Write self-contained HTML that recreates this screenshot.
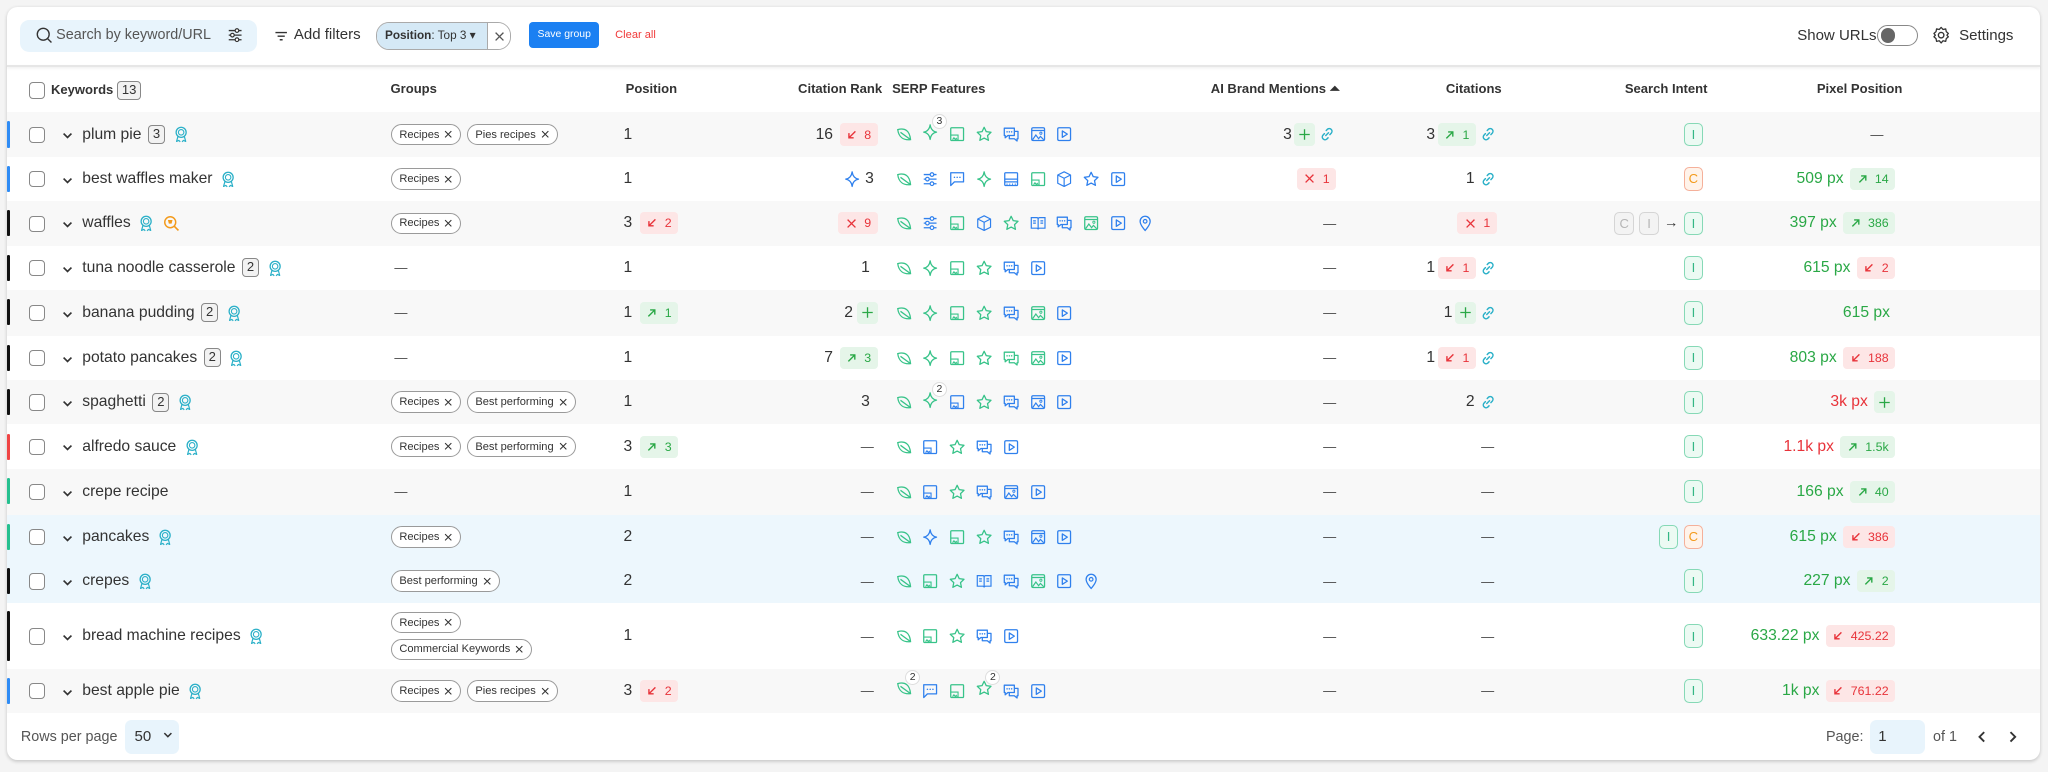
<!DOCTYPE html>
<html><head><meta charset="utf-8">
<style>
html{zoom:1.30612}
body{margin:0;width:1568px;height:591px;background:#f4f4f4;font-family:"Liberation Sans",sans-serif;color:#333;position:relative;overflow:hidden}
.card{position:absolute;left:5px;top:5px;width:1557px;height:577px;background:#fff;border-radius:8px;box-shadow:0 1px 3px rgba(0,0,0,.2)}
.abs{position:absolute}
.r{position:absolute;left:5px;width:1557px;height:34px}
.g{background:#f8f8f8}.bl{background:#edf7fd}
.bar{position:absolute;left:0;top:7px;width:3px;height:20px;border-radius:1px}
.c{position:absolute;top:0;height:100%;display:flex;align-items:center;gap:5px;font-size:12px;white-space:nowrap}
.cb{position:absolute;left:17px;top:50%;margin-top:-6px;width:11px;height:11px;border:1px solid #888;border-radius:3px;background:#fff}
.chev{position:absolute;left:42px;top:50%;margin-top:-4px}
.kw{left:58px}.grp{left:294px;gap:4px}.pn{right:1078px}.pb{left:485px}.cr{right:890px}.sf{left:680px;gap:6.5px}.ai{right:539px}.ci{right:416px}.si{right:258px;gap:4px}.px{right:111px}
.num{display:inline-block;border:1px solid #888;border-radius:3px;background:#f2f2f2;font-size:10px;line-height:13px;padding:0 3px}
.chip{display:inline-flex;align-items:center;gap:3px;border:1px solid #9a9a9a;border-radius:9px;height:15px;padding:0 5px 0 6px;font-size:8.5px;color:#333;background:#fff}
.bd{display:inline-flex;align-items:center;gap:5px;height:17px;padding:0 5px;border-radius:3px;font-size:9.5px}
.rd{background:#fde6e6;color:#e8333a}.gr{background:#e5f5e9;color:#2aa846}
.it{display:inline-flex;align-items:center;justify-content:center;width:15px;height:18px;border-radius:4px;font-size:10px;box-sizing:border-box}
.iI{border:1px solid #86d9b6;background:#ecfaf3;color:#34b785}
.iC{border:1px solid #f5b09a;background:#fff3ea;color:#f39a1b}
.iG{border:1px solid #d5d5d5;background:#f3f3f3;color:#b5b5b5}
svg.i{width:14px;height:14px;flex:none}
.G{color:#37c389}.B{color:#2f80ed}.T{color:#2bb0c8}
.sup{position:relative}
.sup em{position:absolute;left:8px;top:-7px;font-style:normal;font-size:8px;background:#fff;border:1px solid #ddd;border-radius:6px;width:10px;height:10px;line-height:10px;text-align:center;color:#333}
.dash{color:#444;font-size:10px}
.hd{position:absolute;top:62px;font-size:10px;font-weight:bold;color:#333}
.pg{color:#2aa846}.pr{color:#e8333a}
</style></head><body>
<svg width="0" height="0" style="position:absolute">
<defs>
<symbol id="leaf" viewBox="0 0 20 20"><path d="M3 5c8-2 13 1 14 11C9 17 4 13 3 5zM6 8l11 8" fill="none" stroke="currentColor" stroke-width="1.4"/></symbol>
<symbol id="spark" viewBox="0 0 20 20"><path d="M10 2q1 7 7 8q-6 1-7 8q-1-7-7-8q6-1 7-8z" fill="none" stroke="currentColor" stroke-width="1.4" stroke-linejoin="round"/></symbol>
<symbol id="imsq" viewBox="0 0 20 20"><rect x="3" y="3" width="14" height="14" rx="1" fill="none" stroke="currentColor" stroke-width="1.4"/><path d="M3 11h8v6M5 16l1.5-2 1.5 2M8 16l1-1.3 1 1.3" fill="none" stroke="currentColor" stroke-width="1.2"/></symbol>
<symbol id="star" viewBox="0 0 20 20"><path d="M10 2.5l2.3 4.8 5.2.7-3.8 3.6 1 5.2L10 14.3l-4.7 2.5 1-5.2L2.5 8l5.2-.7z" fill="none" stroke="currentColor" stroke-width="1.4" stroke-linejoin="round"/></symbol>
<symbol id="chat" viewBox="0 0 20 20"><path d="M2.5 3.5h11v8h-7l-3 2.5v-2.5h-1zM13.5 7h4v8h-1v2.5l-3-2.5H8v-3.5" fill="none" stroke="currentColor" stroke-width="1.4" stroke-linejoin="round"/><path d="M5.5 7.5h.1M8 7.5h.1M10.5 7.5h.1" stroke="currentColor" stroke-width="1.6" stroke-linecap="round"/></symbol>
<symbol id="img" viewBox="0 0 20 20"><rect x="3" y="3" width="14" height="14" rx="1.5" fill="none" stroke="currentColor" stroke-width="1.4"/><path d="M3 6h14M4 16l3.5-5 3 4 2-2.5 3.5 3.5" fill="none" stroke="currentColor" stroke-width="1.3"/><circle cx="13" cy="9" r="1.2" fill="none" stroke="currentColor"/></symbol>
<symbol id="vid" viewBox="0 0 20 20"><rect x="3" y="3" width="14" height="14" rx="1.5" fill="none" stroke="currentColor" stroke-width="1.4"/><path d="M8 6.5v7l5.5-3.5z" fill="none" stroke="currentColor" stroke-width="1.4" stroke-linejoin="round"/></symbol>
<symbol id="sld" viewBox="0 0 20 20"><path d="M3 5h14M3 10h14M3 15h14" stroke="currentColor" stroke-width="1.4"/><circle cx="12" cy="5" r="2" fill="#fff" stroke="currentColor" stroke-width="1.3"/><circle cx="7" cy="10" r="2" fill="#fff" stroke="currentColor" stroke-width="1.3"/><circle cx="12" cy="15" r="2" fill="#fff" stroke="currentColor" stroke-width="1.3"/></symbol>
<symbol id="cmt" viewBox="0 0 20 20"><path d="M3 3h14v10H7l-4 4z" fill="none" stroke="currentColor" stroke-width="1.4" stroke-linejoin="round"/><path d="M7 8h.1M10 8h.1M13 8h.1" stroke="currentColor" stroke-width="1.6" stroke-linecap="round"/></symbol>
<symbol id="shelf" viewBox="0 0 20 20"><rect x="3" y="3" width="14" height="14" rx="1" fill="none" stroke="currentColor" stroke-width="1.4"/><path d="M3 10h14M3 13h14" stroke="currentColor" stroke-width="1.3"/><path d="M5 15.5h1M8 15.5h1M11 15.5h1M14 15.5h1" stroke="currentColor" stroke-width="1.5"/></symbol>
<symbol id="cube" viewBox="0 0 20 20"><path d="M10 2l7 3.5v9L10 18l-7-3.5v-9zM3 5.5L10 9l7-3.5M10 9v9" fill="none" stroke="currentColor" stroke-width="1.3" stroke-linejoin="round"/></symbol>
<symbol id="book" viewBox="0 0 20 20"><path d="M2.5 4h6a1.5 1.5 0 0 1 1.5 1.5V17a1.5 1.5 0 0 0-1.5-1.5h-6zM17.5 4h-6A1.5 1.5 0 0 0 10 5.5V17a1.5 1.5 0 0 1 1.5-1.5h6zM4.5 7.5h3M4.5 10h3M12.5 7.5h3M12.5 10h3" fill="none" stroke="currentColor" stroke-width="1.3"/></symbol>
<symbol id="pin" viewBox="0 0 20 20"><path d="M10 18s-5.5-6-5.5-10a5.5 5.5 0 0 1 11 0c0 4-5.5 10-5.5 10z" fill="none" stroke="currentColor" stroke-width="1.4"/><circle cx="10" cy="8" r="2" fill="none" stroke="currentColor" stroke-width="1.3"/></symbol>
<symbol id="link" viewBox="0 0 20 20"><path d="M8.5 11.5l3-3M9 6l1.5-1.5a3 3 0 0 1 4.2 4.2L13 10.5M11 14l-1.5 1.5a3 3 0 0 1-4.2-4.2L7 9.5" fill="none" stroke="currentColor" stroke-width="1.6" stroke-linecap="round"/></symbol>
<symbol id="award" viewBox="0 0 20 20"><circle cx="10" cy="8" r="5.5" fill="none" stroke="currentColor" stroke-width="1.4"/><circle cx="10" cy="8" r="3" fill="none" stroke="currentColor" stroke-width="1.2"/><path d="M6.5 12.5L5 18l2.5-1.2L9 18.5M13.5 12.5L15 18l-2.5-1.2L11 18.5" fill="none" stroke="currentColor" stroke-width="1.3" stroke-linejoin="round"/></symbol>
<symbol id="chev" viewBox="0 0 10 10"><path d="M2 3.5l3 3 3-3" fill="none" stroke="#333" stroke-width="1.3"/></symbol>
<symbol id="x" viewBox="0 0 10 10"><path d="M2 2l6 6M8 2L2 8" stroke="currentColor" stroke-width="1"/></symbol>
<symbol id="dn" viewBox="0 0 10 10"><path d="M8 2L2.5 7.5M2.5 3.5v4h4" fill="none" stroke="currentColor" stroke-width="1.2"/></symbol>
<symbol id="up" viewBox="0 0 10 10"><path d="M2 8l5.5-5.5M3.5 2.5h4v4" fill="none" stroke="currentColor" stroke-width="1.2"/></symbol>
<symbol id="plus" viewBox="0 0 10 10"><path d="M5 1v8M1 5h8" stroke="currentColor" stroke-width="1"/></symbol>
</defs></svg>

<div class="card"></div>
<!-- toolbar -->
<div class="abs" style="left:15px;top:15px;width:182px;height:25px;background:#e8f4fc;border-radius:7px"></div>
<svg class="abs" style="left:27px;top:20px" width="14" height="14" viewBox="0 0 20 20"><circle cx="9" cy="9" r="6.5" fill="none" stroke="#333" stroke-width="1.5"/><path d="M13.5 13.5L18 18" stroke="#333" stroke-width="1.5"/></svg>
<div class="abs" style="left:43px;top:21px;font-size:11px;color:#555">Search by keyword/URL</div>
<svg class="abs" style="left:173px;top:20px" width="14" height="14" viewBox="0 0 20 20"><use href="#sld" style="color:#333"/></svg>
<svg class="abs" style="left:210px;top:22px" width="11" height="11" viewBox="0 0 10 10"><path d="M1 2.5h8M2.5 5h5M4 7.5h2" stroke="#333" stroke-width="1"/></svg>
<div class="abs" style="left:225px;top:20px;font-size:11.5px;color:#333">Add filters</div>
<div class="abs" style="left:288px;top:17px;width:102px;height:20px;border:1px solid #aaa;border-radius:10px;overflow:hidden;display:flex">
 <div style="width:84px;background:#d5e9f6;font-size:9px;line-height:20px;padding-left:6px;box-sizing:border-box"><b>Position</b>: Top 3 ▾</div>
 <div style="flex:1;border-left:1px solid #aaa;background:#fff;display:flex;align-items:center;justify-content:center"><svg width="10" height="10"><use href="#x" style="color:#555"/></svg></div>
</div>
<div class="abs" style="left:405px;top:17px;width:54px;height:20px;background:#1b80f2;border-radius:3px;color:#fff;font-size:8px;line-height:20px;text-align:center">Save group</div>
<div class="abs" style="left:471px;top:22px;font-size:8.5px;color:#f03a3a">Clear all</div>
<div class="abs" style="left:1376px;top:21px;font-size:11.5px">Show URLs</div>
<div class="abs" style="left:1437px;top:19px;width:30px;height:15px;border:1px solid #888;border-radius:9px;background:#fff"><div style="position:absolute;left:2px;top:2px;width:11px;height:11px;border-radius:50%;background:#666"></div></div>
<svg class="abs" style="left:1479px;top:20px" width="14" height="14" viewBox="0 0 20 20"><circle cx="10" cy="10" r="3" fill="none" stroke="#333" stroke-width="1.5"/><path d="M10 1.5l2 2.3 3-.6.6 3 2.3 2-1.6 1.8 1.6 1.8-2.3 2-.6 3-3-.6-2 2.3-2-2.3-3 .6-.6-3-2.3-2 1.6-1.8L2.1 8.2l2.3-2 .6-3 3 .6z" fill="none" stroke="#333" stroke-width="1.4" stroke-linejoin="round"/></svg>
<div class="abs" style="left:1500px;top:21px;font-size:11.5px">Settings</div>
<div class="abs" style="left:5px;top:50px;width:1557px;height:1px;background:#e6e6e6;box-shadow:0 1px 2px rgba(0,0,0,.08)"></div>

<!-- header -->
<div class="abs" style="left:22px;top:63px;width:11px;height:11px;border:1px solid #888;border-radius:3px"></div>
<div class="hd" style="left:39px">Keywords <span class="num" style="font-weight:normal">13</span></div>
<div class="hd" style="left:299px">Groups</div>
<div class="hd" style="left:479px">Position</div>
<div class="hd" style="left:611px">Citation Rank</div>
<div class="hd" style="left:683px">SERP Features</div>
<div class="hd" style="left:927px">AI Brand Mentions ⏶</div>
<div class="hd" style="left:1107px">Citations</div>
<div class="hd" style="left:1244px">Search Intent</div>
<div class="hd" style="left:1391px">Pixel Position</div>

<!-- 1 plum pie -->
<div class="r g" style="top:86px"><i class="bar" style="background:#2f8cf5"></i><b class="cb"></b><svg class="chev" width="10" height="10"><use href="#chev"/></svg>
<div class="c kw">plum pie <span class="num">3</span><svg class="i T"><use href="#award"/></svg></div>
<div class="c grp"><span class="chip">Recipes <svg width="8" height="8"><use href="#x"/></svg></span><span class="chip">Pies recipes <svg width="8" height="8"><use href="#x"/></svg></span></div>
<div class="c pn">1</div>
<div class="c cr">16 <span class="bd rd"><svg width="9" height="9"><use href="#dn"/></svg>8</span></div>
<div class="c sf"><svg class="i G"><use href="#leaf"/></svg><span class="sup"><svg class="i G"><use href="#spark"/></svg><em>3</em></span><svg class="i G"><use href="#imsq"/></svg><svg class="i G"><use href="#star"/></svg><svg class="i B"><use href="#chat"/></svg><svg class="i B"><use href="#img"/></svg><svg class="i B"><use href="#vid"/></svg></div>
<div class="c ai" style="gap:2px">3 <span class="bd gr" style="padding:0 3px"><svg width="10" height="10"><use href="#plus"/></svg></span><svg class="i T"><use href="#link"/></svg></div>
<div class="c ci" style="gap:2px">3 <span class="bd gr"><svg width="9" height="9"><use href="#up"/></svg>1</span><svg class="i T"><use href="#link"/></svg></div>
<div class="c si"><span class="it iI">I</span></div>
<div class="c px dash" style="right:120px">—</div>
</div>

<!-- 2 best waffles maker -->
<div class="r" style="top:120px"><i class="bar" style="background:#2f8cf5"></i><b class="cb"></b><svg class="chev" width="10" height="10"><use href="#chev"/></svg>
<div class="c kw">best waffles maker <svg class="i T"><use href="#award"/></svg></div>
<div class="c grp"><span class="chip">Recipes <svg width="8" height="8"><use href="#x"/></svg></span></div>
<div class="c pn">1</div>
<div class="c cr" style="right:893px;gap:3px"><svg class="i B"><use href="#spark"/></svg>3</div>
<div class="c sf"><svg class="i G"><use href="#leaf"/></svg><svg class="i B"><use href="#sld"/></svg><svg class="i B"><use href="#cmt"/></svg><svg class="i G"><use href="#spark"/></svg><svg class="i B"><use href="#shelf"/></svg><svg class="i G"><use href="#imsq"/></svg><svg class="i B"><use href="#cube"/></svg><svg class="i B"><use href="#star"/></svg><svg class="i B"><use href="#vid"/></svg></div>
<div class="c ai"><span class="bd rd"><svg width="10" height="10"><use href="#x"/></svg>1</span></div>
<div class="c ci" style="gap:3px">1 <svg class="i T"><use href="#link"/></svg></div>
<div class="c si"><span class="it iC">C</span></div>
<div class="c px pg">509 px <span class="bd gr"><svg width="9" height="9"><use href="#up"/></svg>14</span></div>
</div>

<!-- 3 waffles -->
<div class="r g" style="top:154px"><i class="bar" style="background:#111"></i><b class="cb"></b><svg class="chev" width="10" height="10"><use href="#chev"/></svg>
<div class="c kw">waffles <svg class="i T"><use href="#award"/></svg><svg class="i" style="color:#f39a1b" viewBox="0 0 20 20"><circle cx="9" cy="9" r="6" fill="none" stroke="currentColor" stroke-width="1.6"/><path d="M13.5 13.5L18 18" stroke="currentColor" stroke-width="1.8"/><path d="M6.5 6.5h5l-1 4h-3z" fill="currentColor"/></svg></div>
<div class="c grp"><span class="chip">Recipes <svg width="8" height="8"><use href="#x"/></svg></span></div>
<div class="c pn">3</div><div class="c pb"><span class="bd rd"><svg width="9" height="9"><use href="#dn"/></svg>2</span></div>
<div class="c cr"><span class="bd rd"><svg width="10" height="10"><use href="#x"/></svg>9</span></div>
<div class="c sf"><svg class="i G"><use href="#leaf"/></svg><svg class="i B"><use href="#sld"/></svg><svg class="i G"><use href="#imsq"/></svg><svg class="i B"><use href="#cube"/></svg><svg class="i G"><use href="#star"/></svg><svg class="i B"><use href="#book"/></svg><svg class="i B"><use href="#chat"/></svg><svg class="i G"><use href="#img"/></svg><svg class="i B"><use href="#vid"/></svg><svg class="i B"><use href="#pin"/></svg></div>
<div class="c ai dash">—</div>
<div class="c ci"><span class="bd rd"><svg width="10" height="10"><use href="#x"/></svg>1</span></div>
<div class="c si"><span class="it iG">C</span><span class="it iG">I</span><span style="font-size:11px">→</span><span class="it iI">I</span></div>
<div class="c px pg">397 px <span class="bd gr"><svg width="9" height="9"><use href="#up"/></svg>386</span></div>
</div>

<!-- 4 tuna -->
<div class="r" style="top:188px"><i class="bar" style="background:#111"></i><b class="cb"></b><svg class="chev" width="10" height="10"><use href="#chev"/></svg>
<div class="c kw">tuna noodle casserole <span class="num">2</span><svg class="i T"><use href="#award"/></svg></div>
<div class="c grp dash" style="left:297px">—</div>
<div class="c pn">1</div>
<div class="c cr" style="right:896px">1</div>
<div class="c sf"><svg class="i G"><use href="#leaf"/></svg><svg class="i G"><use href="#spark"/></svg><svg class="i G"><use href="#imsq"/></svg><svg class="i G"><use href="#star"/></svg><svg class="i B"><use href="#chat"/></svg><svg class="i B"><use href="#vid"/></svg></div>
<div class="c ai dash">—</div>
<div class="c ci" style="gap:2px">1 <span class="bd rd"><svg width="9" height="9"><use href="#dn"/></svg>1</span><svg class="i T"><use href="#link"/></svg></div>
<div class="c si"><span class="it iI">I</span></div>
<div class="c px pg">615 px <span class="bd rd"><svg width="9" height="9"><use href="#dn"/></svg>2</span></div>
</div>

<!-- 5 banana -->
<div class="r g" style="top:222px;height:35px"><i class="bar" style="background:#111"></i><b class="cb"></b><svg class="chev" width="10" height="10"><use href="#chev"/></svg>
<div class="c kw">banana pudding <span class="num">2</span><svg class="i T"><use href="#award"/></svg></div>
<div class="c grp dash" style="left:297px">—</div>
<div class="c pn">1</div><div class="c pb"><span class="bd gr"><svg width="9" height="9"><use href="#up"/></svg>1</span></div>
<div class="c cr" style="gap:3px">2 <span class="bd gr" style="padding:0 3px"><svg width="10" height="10"><use href="#plus"/></svg></span></div>
<div class="c sf"><svg class="i G"><use href="#leaf"/></svg><svg class="i G"><use href="#spark"/></svg><svg class="i G"><use href="#imsq"/></svg><svg class="i G"><use href="#star"/></svg><svg class="i B"><use href="#chat"/></svg><svg class="i G"><use href="#img"/></svg><svg class="i B"><use href="#vid"/></svg></div>
<div class="c ai dash">—</div>
<div class="c ci" style="gap:2px">1 <span class="bd gr" style="padding:0 3px"><svg width="10" height="10"><use href="#plus"/></svg></span><svg class="i T"><use href="#link"/></svg></div>
<div class="c si"><span class="it iI">I</span></div>
<div class="c px pg" style="right:115px">615 px</div>
</div>

<!-- 6 potato -->
<div class="r" style="top:257px"><i class="bar" style="background:#111"></i><b class="cb"></b><svg class="chev" width="10" height="10"><use href="#chev"/></svg>
<div class="c kw">potato pancakes <span class="num">2</span><svg class="i T"><use href="#award"/></svg></div>
<div class="c grp dash" style="left:297px">—</div>
<div class="c pn">1</div>
<div class="c cr">7 <span class="bd gr"><svg width="9" height="9"><use href="#up"/></svg>3</span></div>
<div class="c sf"><svg class="i G"><use href="#leaf"/></svg><svg class="i G"><use href="#spark"/></svg><svg class="i G"><use href="#imsq"/></svg><svg class="i G"><use href="#star"/></svg><svg class="i G"><use href="#chat"/></svg><svg class="i G"><use href="#img"/></svg><svg class="i B"><use href="#vid"/></svg></div>
<div class="c ai dash">—</div>
<div class="c ci" style="gap:2px">1 <span class="bd rd"><svg width="9" height="9"><use href="#dn"/></svg>1</span><svg class="i T"><use href="#link"/></svg></div>
<div class="c si"><span class="it iI">I</span></div>
<div class="c px pg">803 px <span class="bd rd"><svg width="9" height="9"><use href="#dn"/></svg>188</span></div>
</div>

<!-- 7 spaghetti -->
<div class="r g" style="top:291px"><i class="bar" style="background:#111"></i><b class="cb"></b><svg class="chev" width="10" height="10"><use href="#chev"/></svg>
<div class="c kw">spaghetti <span class="num">2</span><svg class="i T"><use href="#award"/></svg></div>
<div class="c grp"><span class="chip">Recipes <svg width="8" height="8"><use href="#x"/></svg></span><span class="chip">Best performing <svg width="8" height="8"><use href="#x"/></svg></span></div>
<div class="c pn">1</div>
<div class="c cr" style="right:896px">3</div>
<div class="c sf"><svg class="i G"><use href="#leaf"/></svg><span class="sup"><svg class="i G"><use href="#spark"/></svg><em>2</em></span><svg class="i B"><use href="#imsq"/></svg><svg class="i G"><use href="#star"/></svg><svg class="i B"><use href="#chat"/></svg><svg class="i B"><use href="#img"/></svg><svg class="i B"><use href="#vid"/></svg></div>
<div class="c ai dash">—</div>
<div class="c ci" style="gap:3px">2 <svg class="i T"><use href="#link"/></svg></div>
<div class="c si"><span class="it iI">I</span></div>
<div class="c px pr">3k px <span class="bd gr" style="padding:0 3px"><svg width="10" height="10"><use href="#plus"/></svg></span></div>
</div>

<!-- 8 alfredo -->
<div class="r" style="top:325px"><i class="bar" style="background:#f04545"></i><b class="cb"></b><svg class="chev" width="10" height="10"><use href="#chev"/></svg>
<div class="c kw">alfredo sauce <svg class="i T"><use href="#award"/></svg></div>
<div class="c grp"><span class="chip">Recipes <svg width="8" height="8"><use href="#x"/></svg></span><span class="chip">Best performing <svg width="8" height="8"><use href="#x"/></svg></span></div>
<div class="c pn">3</div><div class="c pb"><span class="bd gr"><svg width="9" height="9"><use href="#up"/></svg>3</span></div>
<div class="c cr dash" style="right:893px">—</div>
<div class="c sf"><svg class="i G"><use href="#leaf"/></svg><svg class="i B"><use href="#imsq"/></svg><svg class="i G"><use href="#star"/></svg><svg class="i B"><use href="#chat"/></svg><svg class="i B"><use href="#vid"/></svg></div>
<div class="c ai dash">—</div>
<div class="c ci dash" style="right:418px">—</div>
<div class="c si"><span class="it iI">I</span></div>
<div class="c px pr">1.1k px <span class="bd gr"><svg width="9" height="9"><use href="#up"/></svg>1.5k</span></div>
</div>

<!-- 9 crepe recipe -->
<div class="r g" style="top:359px;height:35px"><i class="bar" style="background:#25c08f"></i><b class="cb"></b><svg class="chev" width="10" height="10"><use href="#chev"/></svg>
<div class="c kw">crepe recipe</div>
<div class="c grp dash" style="left:297px">—</div>
<div class="c pn">1</div>
<div class="c cr dash" style="right:893px">—</div>
<div class="c sf"><svg class="i G"><use href="#leaf"/></svg><svg class="i B"><use href="#imsq"/></svg><svg class="i G"><use href="#star"/></svg><svg class="i B"><use href="#chat"/></svg><svg class="i B"><use href="#img"/></svg><svg class="i B"><use href="#vid"/></svg></div>
<div class="c ai dash">—</div>
<div class="c ci dash" style="right:418px">—</div>
<div class="c si"><span class="it iI">I</span></div>
<div class="c px pg">166 px <span class="bd gr"><svg width="9" height="9"><use href="#up"/></svg>40</span></div>
</div>

<!-- 10 pancakes -->
<div class="r bl" style="top:394px"><i class="bar" style="background:#25c08f"></i><b class="cb"></b><svg class="chev" width="10" height="10"><use href="#chev"/></svg>
<div class="c kw">pancakes <svg class="i T"><use href="#award"/></svg></div>
<div class="c grp"><span class="chip">Recipes <svg width="8" height="8"><use href="#x"/></svg></span></div>
<div class="c pn">2</div>
<div class="c cr dash" style="right:893px">—</div>
<div class="c sf"><svg class="i G"><use href="#leaf"/></svg><svg class="i B"><use href="#spark"/></svg><svg class="i G"><use href="#imsq"/></svg><svg class="i G"><use href="#star"/></svg><svg class="i B"><use href="#chat"/></svg><svg class="i B"><use href="#img"/></svg><svg class="i B"><use href="#vid"/></svg></div>
<div class="c ai dash">—</div>
<div class="c ci dash" style="right:418px">—</div>
<div class="c si"><span class="it iI">I</span><span class="it iC">C</span></div>
<div class="c px pg">615 px <span class="bd rd"><svg width="9" height="9"><use href="#dn"/></svg>386</span></div>
</div>

<!-- 11 crepes -->
<div class="r bl" style="top:428px"><i class="bar" style="background:#111"></i><b class="cb"></b><svg class="chev" width="10" height="10"><use href="#chev"/></svg>
<div class="c kw">crepes <svg class="i T"><use href="#award"/></svg></div>
<div class="c grp"><span class="chip">Best performing <svg width="8" height="8"><use href="#x"/></svg></span></div>
<div class="c pn">2</div>
<div class="c cr dash" style="right:893px">—</div>
<div class="c sf"><svg class="i G"><use href="#leaf"/></svg><svg class="i G"><use href="#imsq"/></svg><svg class="i G"><use href="#star"/></svg><svg class="i B"><use href="#book"/></svg><svg class="i B"><use href="#chat"/></svg><svg class="i G"><use href="#img"/></svg><svg class="i B"><use href="#vid"/></svg><svg class="i B"><use href="#pin"/></svg></div>
<div class="c ai dash">—</div>
<div class="c ci dash" style="right:418px">—</div>
<div class="c si"><span class="it iI">I</span></div>
<div class="c px pg">227 px <span class="bd gr"><svg width="9" height="9"><use href="#up"/></svg>2</span></div>
</div>

<!-- 12 bread -->
<div class="r" style="top:462px;height:50px"><i class="bar" style="background:#111;top:6px;height:38px"></i><b class="cb"></b><svg class="chev" width="10" height="10"><use href="#chev"/></svg>
<div class="c kw">bread machine recipes <svg class="i T"><use href="#award"/></svg></div>
<div class="c grp" style="flex-direction:column;align-items:flex-start;justify-content:center;gap:4px"><span class="chip">Recipes <svg width="8" height="8"><use href="#x"/></svg></span><span class="chip">Commercial Keywords <svg width="8" height="8"><use href="#x"/></svg></span></div>
<div class="c pn">1</div>
<div class="c cr dash" style="right:893px">—</div>
<div class="c sf"><svg class="i G"><use href="#leaf"/></svg><svg class="i G"><use href="#imsq"/></svg><svg class="i G"><use href="#star"/></svg><svg class="i B"><use href="#chat"/></svg><svg class="i B"><use href="#vid"/></svg></div>
<div class="c ai dash">—</div>
<div class="c ci dash" style="right:418px">—</div>
<div class="c si"><span class="it iI">I</span></div>
<div class="c px pg">633.22 px <span class="bd rd"><svg width="9" height="9"><use href="#dn"/></svg>425.22</span></div>
</div>

<!-- 13 apple -->
<div class="r g" style="top:512px"><i class="bar" style="background:#2f8cf5"></i><b class="cb"></b><svg class="chev" width="10" height="10"><use href="#chev"/></svg>
<div class="c kw">best apple pie <svg class="i T"><use href="#award"/></svg></div>
<div class="c grp"><span class="chip">Recipes <svg width="8" height="8"><use href="#x"/></svg></span><span class="chip">Pies recipes <svg width="8" height="8"><use href="#x"/></svg></span></div>
<div class="c pn">3</div><div class="c pb"><span class="bd rd"><svg width="9" height="9"><use href="#dn"/></svg>2</span></div>
<div class="c cr dash" style="right:893px">—</div>
<div class="c sf"><span class="sup"><svg class="i G"><use href="#leaf"/></svg><em>2</em></span><svg class="i B"><use href="#cmt"/></svg><svg class="i G"><use href="#imsq"/></svg><span class="sup"><svg class="i G"><use href="#star"/></svg><em>2</em></span><svg class="i B"><use href="#chat"/></svg><svg class="i B"><use href="#vid"/></svg></div>
<div class="c ai dash">—</div>
<div class="c ci dash" style="right:418px">—</div>
<div class="c si"><span class="it iI">I</span></div>
<div class="c px pg">1k px <span class="bd rd"><svg width="9" height="9"><use href="#dn"/></svg>761.22</span></div>
</div>

<!-- footer -->
<div class="abs" style="left:16px;top:558px;font-size:11px;color:#555">Rows per page</div>
<div class="abs" style="left:96px;top:551px;width:41px;height:26px;background:#e8f4fc;border-radius:5px;font-size:11.5px;line-height:26px;padding-left:7px;box-sizing:border-box">50 <svg width="9" height="9" style="margin-left:5px"><use href="#chev"/></svg></div>
<div class="abs" style="left:1398px;top:558px;font-size:11px;color:#555">Page:</div>
<div class="abs" style="left:1432px;top:551px;width:42px;height:26px;background:#e8f4fc;border-radius:5px;font-size:11.5px;line-height:26px;padding-left:6px;box-sizing:border-box">1</div>
<div class="abs" style="left:1480px;top:558px;font-size:11px;color:#555">of 1</div>
<svg class="abs" style="left:1511px;top:558px" width="12" height="12" viewBox="0 0 10 10"><path d="M6.5 2L3.5 5l3 3" fill="none" stroke="#333" stroke-width="1.2"/></svg>
<svg class="abs" style="left:1535px;top:558px" width="12" height="12" viewBox="0 0 10 10"><path d="M3.5 2l3 3-3 3" fill="none" stroke="#333" stroke-width="1.2"/></svg>
</body></html>
